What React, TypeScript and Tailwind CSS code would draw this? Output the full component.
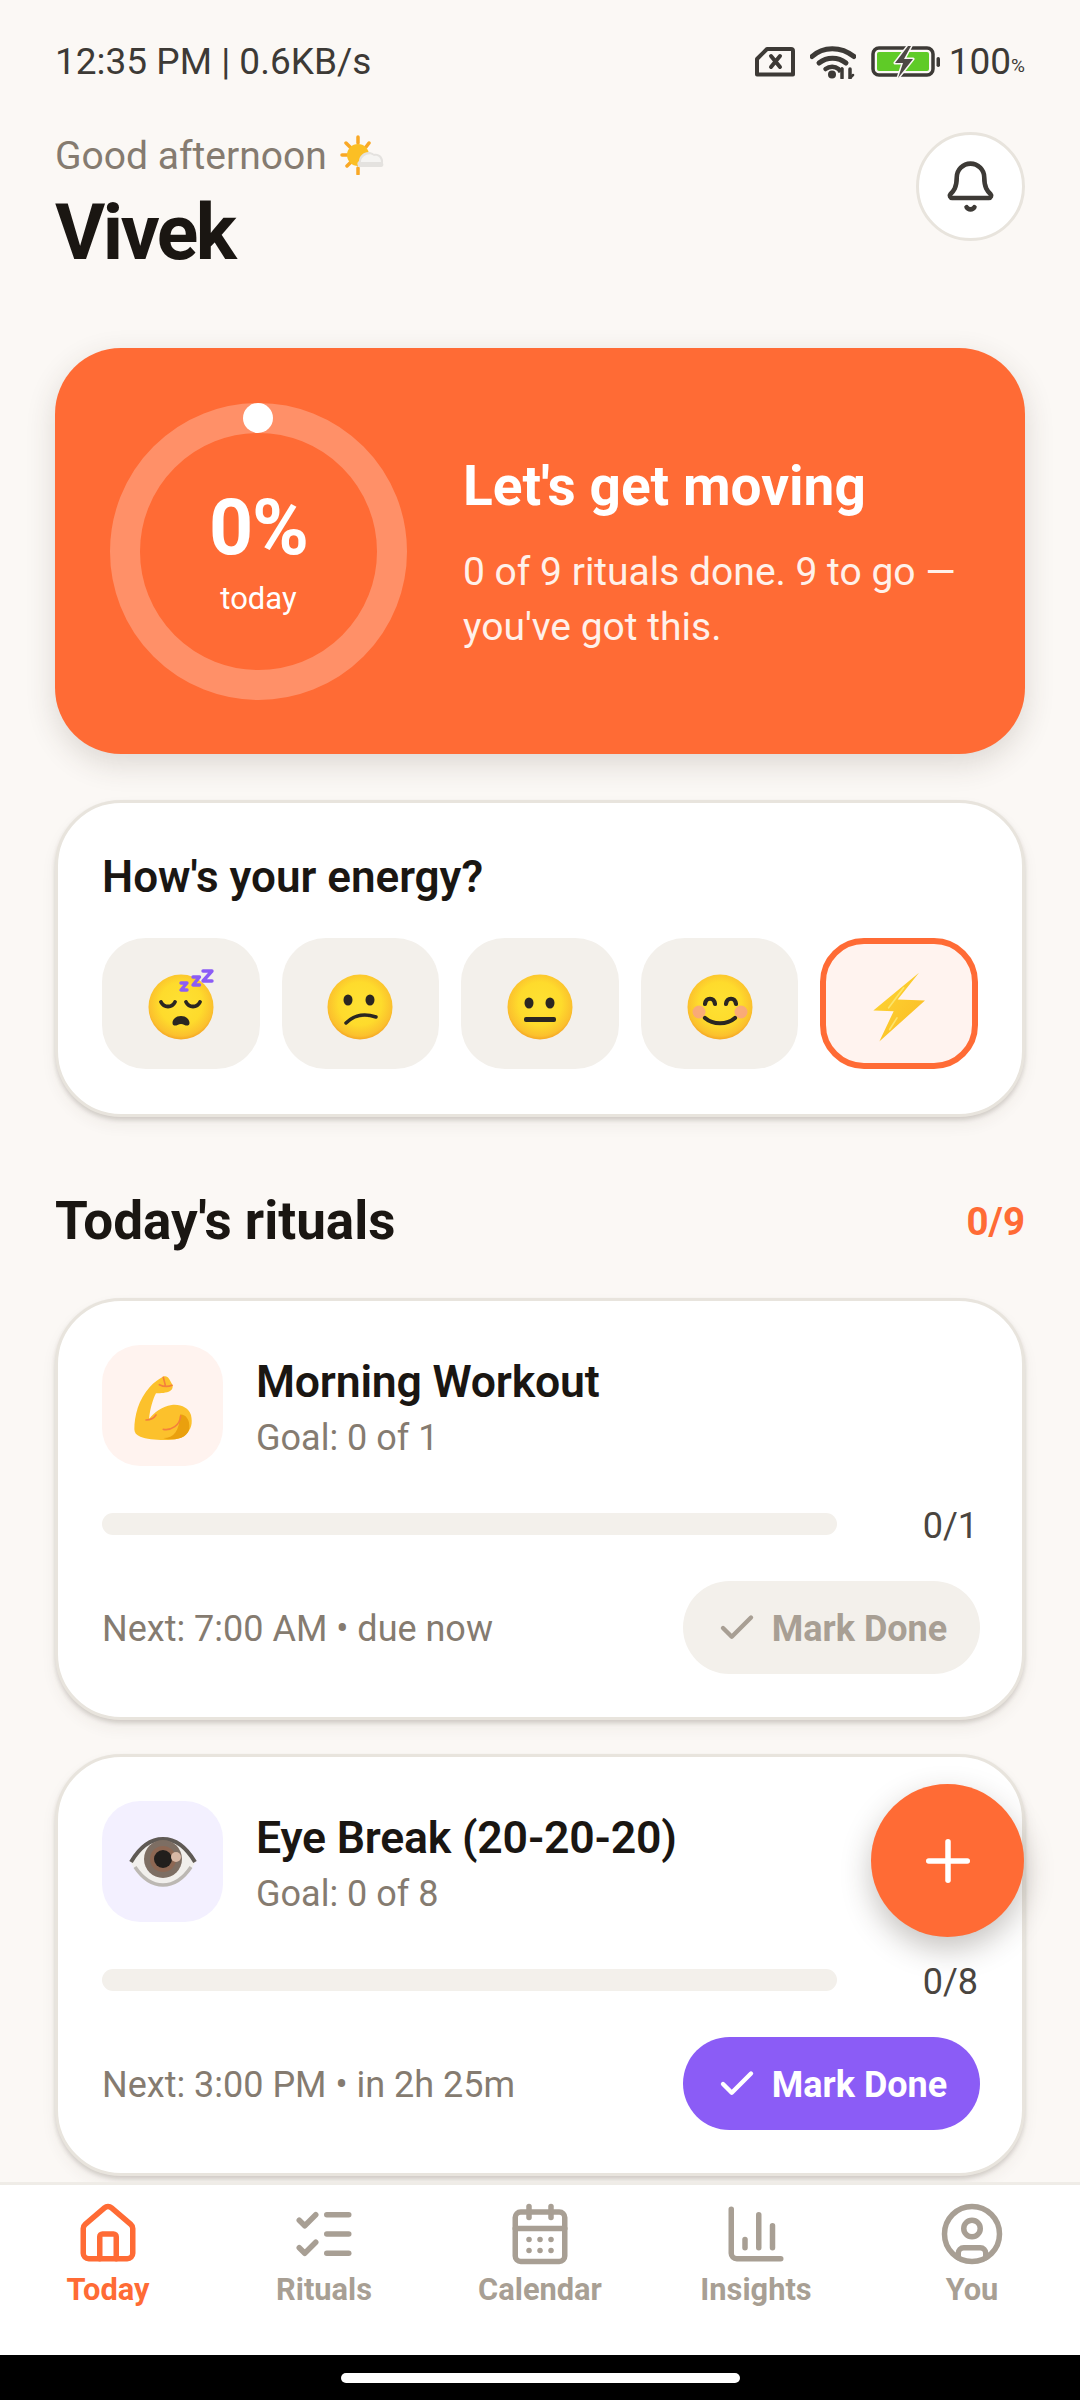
import { Bell, CalendarDays, ChartColumn, Check, CircleUser, House, ListChecks, Plus } from "lucide-react";
import type { ReactNode } from "react";

function SimX() {
  return (
    <svg width="40" height="30" viewBox="0 0 40 30" fill="none" stroke="#3d3a36">
      <path d="M2 27.500V12L12 2h24a2 2 0 0 1 2 2v23.500H2Z" strokeWidth="4" strokeLinejoin="round" />
      <path d="M16 9l9 11M25 9l-9 11" strokeWidth="4" strokeLinecap="round" />
    </svg>
  );
}

function Wifi() {
  return (
    <svg width="46" height="34" viewBox="0 0 46 34" fill="none" stroke="#3d3a36" strokeLinecap="round">
      <path d="M2 11.500C13 1 31 1 44 11.500" strokeWidth="5" />
      <path d="M9 18c8-6.500 19-6.500 27 0" strokeWidth="5" />
      <path d="M15.500 24c4-3 9.500-3 13 0" strokeWidth="4.500" />
      <circle cx="22" cy="29.500" r="4" fill="#3d3a36" stroke="none" />
      <path d="M32 24v9M40 33v-9" strokeWidth="3.500" />
      <path d="M29 26.500l3-3M40 33l3-3" strokeWidth="2.500" />
    </svg>
  );
}

function Battery() {
  return (
    <svg width="70" height="32" viewBox="0 0 70 32">
      <rect x="2" y="2" width="60" height="27" rx="6" fill="none" stroke="#3d3a36" strokeWidth="3.500" />
      <rect x="6" y="6" width="52" height="19" rx="2" fill="#5fcb27" />
      <rect x="65.500" y="11" width="3.500" height="10" rx="1.700" fill="#3d3a36" />
      <path d="M37 0L24 17h8l-5 15 15-19h-9l7-13Z" fill="#4d4945" stroke="#fbf8f5" strokeWidth="3" strokeLinejoin="round" paintOrder="stroke" />
    </svg>
  );
}

function SunCloud() {
  return (
    <svg width="46" height="40" viewBox="0 0 46 40" className="ml-[12px] mt-[-2px]">
      <g stroke="#f9a825" strokeWidth="3.500" strokeLinecap="round">
        <path d="M19 2v6M19 33v6M3 20h5M7 8l4 4M8 31l4-4M30 8l-3 4" />
      </g>
      <circle cx="19" cy="20" r="11" fill="#fbbf24" />
      <path d="M19 31c-1-2-1-4 1-5 0-7 9-12 15-7 5-1 10 3 9 9 1 2 0 4-2 4H20c-1 0-1 0-1-1Z" fill="#e4e2df" />
      <path d="M22 26c1-5 8-9 13-5 4-1 7 2 7 6H22Z" fill="#f5f4f2" />
    </svg>
  );
}

function Face({ children }: { children: ReactNode }) {
  return (
    <svg width="72" height="72" viewBox="0 0 72 72" className="overflow-visible">
      <defs>
        <radialGradient id="faceFill" cx="50%" cy="45%" r="55%">
          <stop offset="0%" stopColor="#fee133" />
          <stop offset="60%" stopColor="#fedb2c" />
          <stop offset="90%" stopColor="#fbc02d" />
          <stop offset="100%" stopColor="#f5a623" />
        </radialGradient>
      </defs>
      <circle cx="36" cy="36" r="32.500" fill="url(#faceFill)" />
      {children}
    </svg>
  );
}

const ink = "#2a2622";

function Sleepy() {
  return (
    <Face>
      <path d="M16 31c3 6 11 6 14 0M41 31c3 6 11 6 14 0" fill="none" stroke={ink} strokeWidth="3.800" strokeLinecap="round" />
      <path d="M36 45c6 0 8.500 4 8.500 7 0 3-3 3-5 2-2.500-1.200-4.500-1.200-7 0-2 1-5 1-5-2 0-3 2.500-7 8.500-7Z" fill={ink} />
      <path d="M36 12h6l-6 7h6M48 6h6.500l-6.500 8h6.500M58 0h9l-9 10h9" fill="none" stroke="#8b5cf6" strokeWidth="3.400" strokeLinejoin="round" strokeLinecap="round" />
    </Face>
  );
}

function Confused() {
  return (
    <Face>
      <ellipse cx="24" cy="29" rx="4.500" ry="5.500" fill={ink} />
      <ellipse cx="46" cy="29" rx="4.500" ry="5.500" fill={ink} />
      <path d="M22 52Q34 40 52 46" fill="none" stroke={ink} strokeWidth="3.500" strokeLinecap="round" />
    </Face>
  );
}

function Neutral() {
  return (
    <Face>
      <ellipse cx="25" cy="32" rx="4.500" ry="5.500" fill={ink} />
      <ellipse cx="46" cy="32" rx="4.500" ry="5.500" fill={ink} />
      <rect x="20" y="46" width="32" height="5" rx="2" fill={ink} />
    </Face>
  );
}

function Smile() {
  return (
    <Face>
      <circle cx="15" cy="41" r="6.500" fill="#f8a08a" opacity="0.8" />
      <circle cx="57" cy="41" r="6.500" fill="#f8a08a" opacity="0.8" />
      <path d="M21 33c1-7 9-7 10 0M42 33c1-7 9-7 10 0" fill="none" stroke={ink} strokeWidth="4.200" strokeLinecap="round" />
      <path d="M21 47c8 7 22 7 30 0" fill="none" stroke={ink} strokeWidth="4.200" strokeLinecap="round" />
    </Face>
  );
}

function Bolt() {
  return (
    <svg width="55" height="72" viewBox="785 125 165 215">
      <defs>
        <linearGradient id="boltFill" x1="0" y1="0" x2="1" y2="1">
          <stop offset="0%" stopColor="#fdd835" />
          <stop offset="100%" stopColor="#fbb923" />
        </linearGradient>
      </defs>
      <path d="M926 130L862 210L944 213L807 336L850 245L789 243Z" fill="url(#boltFill)" />
      <path d="M880 175L835 235M860 265L838 300" stroke="#fdeb7a" strokeWidth="5" strokeLinecap="round" opacity="0.8" />
    </svg>
  );
}

function Muscle() {
  return (
    <svg width="121" height="121" viewBox="6 15 363 363">
      <path d="M103 268c0-40 12-90 47-128 12-13 28-24 42-31 6-2 12 2 16 9l10 18c1 8-2 14-8 17-10 6-28 7-42 7-8 14-18 45-21 78 14-20 38-38 68-43 28-3 50 8 58 30 5 24 3 44-20 62-12 9-32 13-60 13-28-1-55-3-72-10-12-4-18-12-18-22Z" fill="#fcc12c" />
      <path d="M215 298c-10 0-20-2-25-4 32 0 48-22 50-70 16-2 30 14 28 40-2 22-24 34-53 34Z" fill="#eaa00e" />
      <path d="M138 240c14 0 24-6 30-15M190 268c24 4 50-12 52-40M178 134c12 6 28 6 38 2M190 112l6 24" fill="none" stroke="#f4803c" strokeWidth="5" strokeLinecap="round" />
    </svg>
  );
}

function Eye() {
  return (
    <svg width="68" height="50" viewBox="0 0 68 50">
      <path d="M1 24C12 6 24 1 34 1s22 5 33 23C58 42 46 49 34 49S10 42 1 24Z" fill="#f1efec" />
      <path d="M2 25C12 8 24 2 34 2s22 6 32 23" fill="none" stroke="#5f5a55" strokeWidth="4" />
      <path d="M6 30c8 12 18 18 28 18s20-6 28-18" fill="none" stroke="#bcb8b3" strokeWidth="3.500" />
      <circle cx="34" cy="22" r="19" fill="#7d6e63" />
      <circle cx="34" cy="22" r="13" fill="#9a6247" opacity="0.55" />
      <circle cx="34" cy="22" r="9" fill="#211e1c" />
      <circle cx="47" cy="20" r="5" fill="#d8b8a5" />
    </svg>
  );
}

function Ritual({
  tile,
  icon,
  title,
  goal,
  count,
  next,
  active,
}: {
  tile: string;
  icon: ReactNode;
  title: string;
  goal: string;
  count: string;
  next: string;
  active: boolean;
}) {
  return (
    <div className="rounded-[66px] border-[3px] border-[#e8e4dd] bg-white px-[44px] pt-[44px] pb-[43px] shadow-[0_3px_4px_rgba(60,50,40,0.18),0_8px_16px_rgba(60,50,40,0.06)]">
      <div className="flex items-center gap-[33px]">
        <div className={`flex h-[121px] w-[121px] items-center justify-center overflow-hidden rounded-[38px] ${tile}`}>{icon}</div>
        <div className="flex flex-col pt-[5px]">
          <div className="text-[44.600px] leading-[56px] font-semibold text-[#1a1612] tracking-[-0.2px]">{title}</div>
          <div className="mt-[3px] text-[36px] leading-[50px] text-[#857b70]">{goal}</div>
        </div>
      </div>
      <div className="mt-[47px] flex h-[22px] items-center">
        <div className="h-[22px] flex-1 rounded-full bg-[#f3f0eb]" />
        <div className="mt-[3px] w-[141px] text-right text-[36px] leading-[44px] text-[#4a453f]">{count}</div>
      </div>
      <div className="mt-[46px] flex items-center justify-between">
        <div className="mt-[3px] text-[36px] leading-[50px] text-[#857b70]">{next}</div>
        <div
          className={`mr-[-2px] flex h-[93px] w-[297px] items-center justify-center gap-[14px] rounded-full text-[36px] font-bold ${
            active ? "bg-[#8b5cf6] text-white" : "bg-[#f3f0eb] text-[#a89f94]"
          }`}
        >
          <Check size={42} strokeWidth={2.5} />
          <span className="mt-[2px]">Mark Done</span>
        </div>
      </div>
    </div>
  );
}

const tabs = [
  { label: "Today", Icon: House, on: true },
  { label: "Rituals", Icon: ListChecks, on: false },
  { label: "Calendar", Icon: CalendarDays, on: false },
  { label: "Insights", Icon: ChartColumn, on: false },
  { label: "You", Icon: CircleUser, on: false },
];

export default function App() {
  const moods = [<Sleepy key="a" />, <Confused key="b" />, <Neutral key="c" />, <Smile key="d" />];
  return (
    <div className="flex h-[2400px] w-[1080px] flex-col overflow-hidden bg-[#fbf8f5] [font-family:Roboto,sans-serif]">
      <div className="relative min-h-0 flex-1 overflow-hidden">
        <div className="flex h-[124px] items-center justify-between px-[55px] text-[37px] text-[#3d3a36]">
          <span>12:35 PM | 0.6KB/s</span>
          <div className="flex items-center">
            <SimX />
            <div className="ml-[15px]">
              <Wifi />
            </div>
            <div className="ml-[15px]">
              <Battery />
            </div>
            <span className="ml-[8px]">100</span>
            <span className="mt-[8px] text-[19px]">%</span>
          </div>
        </div>

        <div className="px-[55px]">
          <div className="mt-[8px] flex items-start justify-between">
            <div>
              <div className="flex items-center text-[39px] leading-[48px] text-[#857b70]">
                <span>Good afternoon</span>
                <SunCloud />
              </div>
              <div className="mt-[9px] text-[77px] leading-[88px] font-bold tracking-[-2.500px] text-[#1a1612]">Vivek</div>
            </div>
            <div className="flex h-[109px] w-[109px] items-center justify-center rounded-full border-[3px] border-[#e8e4dd] bg-white text-[#3d3a36]">
              <Bell size={55} strokeWidth={2} />
            </div>
          </div>

          <div className="mt-[71px] flex h-[406px] items-center gap-[56px] rounded-[66px] bg-[#ff6b35] pl-[55px] pr-[40px] shadow-[0_10px_30px_rgba(60,50,40,0.16)]">
            <div className="relative flex h-[297px] w-[297px] shrink-0 flex-col items-center rounded-full border-[30px] border-[#ff9068] text-white">
              <div className="absolute top-[-30px] left-[103px] h-[30px] w-[30px] rounded-full bg-white" />
              <div className="mt-[51px] text-[77px] leading-[88px] font-bold tracking-[-1px]">0%</div>
              <div className="mt-[8px] text-[31px] leading-[38px]">today</div>
            </div>
            <div className="pt-[6px] text-white">
              <div className="text-[55px] leading-[66px] font-bold">Let's get moving</div>
              <div className="mt-[26px] text-[39px] leading-[55px] text-[#fff1ea]">0 of 9 rituals done. 9 to go — you've got this.</div>
            </div>
          </div>

          <div className="mt-[46px] rounded-[66px] border-[3px] border-[#e8e4dd] bg-white px-[44px] pt-[44px] pb-[45px] shadow-[0_3px_4px_rgba(60,50,40,0.18),0_8px_16px_rgba(60,50,40,0.06)]">
            <div className="text-[44px] leading-[60px] font-semibold text-[#1a1612]">How's your energy?</div>
            <div className="mt-[31px] grid grid-cols-5 gap-[22px]">
              {moods.map((m) => (
                <div key={m.key} className="flex h-[131px] items-center justify-center rounded-[44px] bg-[#f3f0eb] pt-[6px]">
                  {m}
                </div>
              ))}
              <div className="flex h-[131px] items-center justify-center rounded-[44px] border-[6px] border-[#ff6b35] bg-[#fff3ef] pt-[6px]">
                <Bolt />
              </div>
            </div>
          </div>

          <div className="mt-[70px] flex h-[66px] items-center justify-between pt-[3px]">
            <div className="text-[53px] font-bold text-[#1a1612]">Today's rituals</div>
            <div className="text-[38.500px] font-bold text-[#ff6b35]">0/9</div>
          </div>

          <div className="mt-[45px] flex flex-col gap-[34px]">
            <Ritual
              tile="bg-[#fff3ef]"
              icon={<Muscle />}
              title="Morning Workout"
              goal="Goal: 0 of 1"
              count="0/1"
              next="Next: 7:00 AM • due now"
              active={false}
            />
            <Ritual
              tile="bg-[#f3f0ff]"
              icon={<Eye />}
              title="Eye Break (20-20-20)"
              goal="Goal: 0 of 8"
              count="0/8"
              next="Next: 3:00 PM • in 2h 25m"
              active
            />
          </div>
        </div>

        <div className="absolute right-[56px] bottom-[245px] flex h-[153px] w-[153px] items-center justify-center rounded-full bg-[#ff6b35] text-white shadow-[0_12px_30px_rgba(50,40,30,0.28)]">
          <Plus size={66} strokeWidth={2} />
        </div>
      </div>

      <div className="flex h-[173px] border-t-[3px] border-[#efece7] bg-white pt-[16px]">
        {tabs.map(({ label, Icon, on }) => (
          <div key={label} className={`flex flex-1 flex-col items-center ${on ? "text-[#ff6b35]" : "text-[#a89f94]"}`}>
            <Icon size={66} strokeWidth={2} />
            <div className="mt-[5px] text-[30.800px] leading-[36px] font-bold">{label}</div>
          </div>
        ))}
      </div>

      <div className="flex h-[45px] items-center justify-center bg-black">
        <div className="h-[10px] w-[399px] rounded-full bg-white" />
      </div>
    </div>
  );
}
